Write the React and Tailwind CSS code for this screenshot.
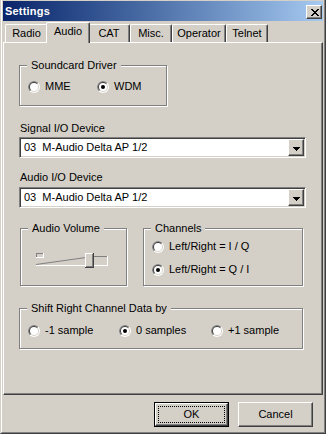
import React from "react";

// classic 3d edges
const raised =
  "border border-t-white border-l-white border-r-[#404040] border-b-[#404040] shadow-[inset_-1px_-1px_0_#808080] bg-[#d4d0c8]";

const Radio = ({ checked }) => (
  <svg width="12" height="12" viewBox="0 0 12 12" className="shrink-0">
    <circle cx="6" cy="6" r="6" fill="#ffffff" />
    <path d="M10.243 1.757A6 6 0 0 0 1.757 10.243Z" fill="#808080" />
    <circle cx="6" cy="6" r="5" fill="#d4d0c8" />
    <path d="M9.536 2.464A5 5 0 0 0 2.464 9.536Z" fill="#404040" />
    <circle cx="6" cy="6" r="4" fill="#ffffff" />
    {checked && <circle cx="6" cy="6" r="2" fill="#000000" />}
  </svg>
);

const Option = ({ checked, label, className = "" }) => (
  <div className={"flex items-center gap-[5px] h-[13px] " + className}>
    <Radio checked={checked} />
    <span className="leading-[13px] whitespace-nowrap">{label}</span>
  </div>
);

const Group = ({ title, className = "", children }) => (
  <div
    className={
      "relative border border-[#808080] shadow-[inset_1px_1px_0_#fff,1px_1px_0_#fff] " +
      className
    }
  >
    <span className="absolute left-[7px] top-[-7px] bg-[#d4d0c8] px-[4px] leading-[13px] whitespace-nowrap">
      {title}
    </span>
    {children}
  </div>
);

const Combo = ({ value }) => (
  <div className="flex h-[21px] w-[287px] border border-t-[#808080] border-l-[#808080] border-b-white border-r-white bg-white p-[1px] shadow-[inset_1px_1px_0_#404040,inset_-1px_-1px_0_#d4d0c8]">
    <div className="flex-1 flex items-center pl-[3px] leading-[13px] whitespace-pre">{value}</div>
    <div className={"w-[16px] h-[17px] flex items-start justify-center pt-[7px] " + raised}>
      <svg width="7" height="4" viewBox="0 0 7 4" shapeRendering="crispEdges">
        <path d="M0 0H7L3.5 4Z" fill="#000" />
      </svg>
    </div>
  </div>
);

const Tab = ({ label, className = "" }) => (
  <div
    className={
      "h-[18px] flex justify-center pt-[2px] leading-[13px] border-l border-t border-r border-l-white border-t-white border-r-[#404040] rounded-t-[2px] shadow-[inset_-1px_0_0_#808080] " +
      className
    }
  >
    {label}
  </div>
);

const Slider = () => (
  <svg width="72" height="16" viewBox="0 0 72 16" shapeRendering="crispEdges">
    {/* small box at left */}
    <path d="M0 0.5H7M0.5 0V4" stroke="#808080" fill="none" />
    <path d="M0 4.5H8M7.5 0V5" stroke="#ffffff" fill="none" />
    {/* wedge */}
    <path d="M0 11.5L57 3.5H71" stroke="#808080" fill="none" shapeRendering="auto" />
    <path d="M0 12.5H72M71.5 3V13" stroke="#ffffff" fill="none" />
    {/* thumb */}
    <rect x="49" y="0" width="8" height="15" fill="#d4d0c8" />
    <path d="M49.5 15V0.5H56" stroke="#ffffff" fill="none" />
    <path d="M49 14.5H57.5V0" stroke="#404040" fill="none" />
    <path d="M50 13.5H56.5V1" stroke="#808080" fill="none" />
  </svg>
);

export default function App() {
  return (
    <div className="w-[326px] h-[434px] bg-[#d4d0c8] border-l border-r border-b border-l-[#d4d0c8] border-r-[#404040] border-b-[#404040] font-['Liberation_Sans',Arial,sans-serif] text-[11px] text-black">
      <div className="h-full flex flex-col border-l border-r border-b border-l-white border-r-[#808080] border-b-[#808080] pt-[1px] px-[1px]">
        {/* title bar */}
        <div className="h-[20px] flex items-start justify-between bg-linear-to-r from-[#0a246a] to-[#a6caf0] pl-[2px] pr-[1px]">
          <span className="pt-[4px] font-bold text-white leading-[13px] tracking-[0.2px]">Settings</span>
          <div className={"mt-[4px] w-[16px] h-[14px] flex items-start pl-[4px] pt-[3px] " + raised}>
            <svg width="8" height="7" viewBox="0 0 8 7" shapeRendering="crispEdges">
              <path
                d="M0 0h2v1H0zM6 0h2v1H6zM1 1h2v1H1zM5 1h2v1H5zM2 2h4v1H2zM3 3h2v1H3zM2 4h4v1H2zM1 5h2v1H1zM5 5h2v1H5zM0 6h2v1H0zM6 6h2v1H6z"
                fill="#000"
              />
            </svg>
          </div>
        </div>

        {/* tabs */}
        <div className="mt-[1px] h-[20px] flex items-end pl-[2px]">
          <Tab label="Radio" className="w-[43px]" />
          <div className="relative z-10 -mx-[2px] mb-[-1px] w-[44px] h-[21px] flex justify-center pt-[2px] leading-[13px] bg-[#d4d0c8] border-l border-t border-r border-l-white border-t-white border-r-[#404040] rounded-t-[2px] shadow-[inset_-1px_0_0_#808080]">
            Audio
          </div>
          <Tab label="CAT" className="w-[42px]" />
          <Tab label="Misc." className="w-[42px]" />
          <Tab label="Operator" className="w-[54px]" />
          <Tab label="Telnet" className="w-[42px]" />
        </div>

        {/* tab page */}
        <div className="h-[353px] flex flex-col items-start pl-[15px] border border-t-white border-l-white border-r-[#404040] border-b-[#404040] shadow-[inset_-1px_-1px_0_#808080]">
          <Group title="Soundcard Driver" className="mt-[22px] w-[148px] h-[41px]">
            <div className="flex pt-[14px] pl-[8px]">
              <Option label="MME" className="w-[69px]" />
              <Option label="WDM" checked />
            </div>
          </Group>

          <div className="mt-[16px] pl-[1px] leading-[13px]">Signal I/O Device</div>
          <div className="mt-[2px]">
            <Combo value="03  M-Audio Delta AP 1/2" />
          </div>

          <div className="mt-[13px] pl-[1px] leading-[13px]">Audio I/O Device</div>
          <div className="mt-[3px]">
            <Combo value="03  M-Audio Delta AP 1/2" />
          </div>

          <div className="mt-[20px] flex">
            <Group title="Audio Volume" className="ml-[1px] w-[107px] h-[58px]">
              <div className="pl-[15px] pt-[24px]">
                <Slider />
              </div>
            </Group>
            <Group title="Channels" className="ml-[16px] w-[160px] h-[58px]">
              <div className="flex flex-col pl-[8px] pt-[11px] gap-[10px]">
                <Option label="Left/Right = I / Q" />
                <Option label="Left/Right = Q / I" checked />
              </div>
            </Group>
          </div>

          <Group title="Shift Right Channel Data by" className="mt-[22px] w-[284px] h-[41px]">
            <div className="flex pt-[15px] pl-[8px]">
              <Option label="-1 sample" className="w-[91px]" />
              <Option label="0 samples" checked className="w-[92px]" />
              <Option label="+1 sample" />
            </div>
          </Group>
        </div>

        {/* buttons */}
        <div className="mt-[7px] flex justify-end gap-[9px] pr-[10px]">
          <div className="w-[75px] h-[25px] border border-black">
            <div className={"h-full p-[2px] " + raised}>
              <div className="h-full border border-dotted border-black flex items-center justify-center leading-[13px]">
                OK
              </div>
            </div>
          </div>
          <div className={"w-[75px] h-[25px] flex items-center justify-center leading-[13px] " + raised}>
            Cancel
          </div>
        </div>
      </div>
    </div>
  );
}
